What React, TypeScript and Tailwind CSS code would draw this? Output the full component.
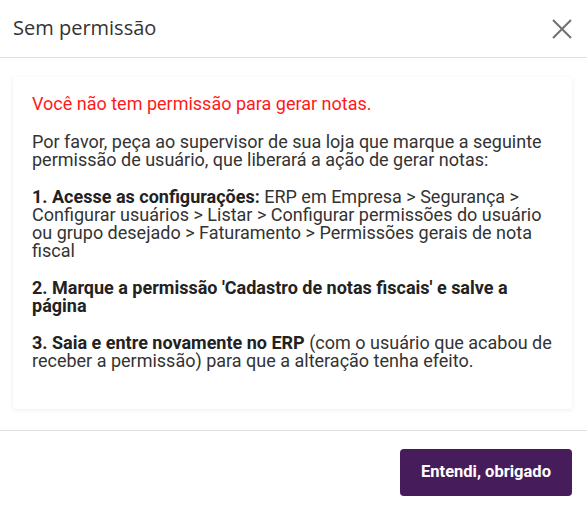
export default function App() {
  return (
    <div className="w-[587px] h-[512px] bg-white flex flex-col font-['Roboto',sans-serif] text-[#333]">
      {/* header */}
      <div className="h-[58px] flex items-center justify-between pl-[13px] pr-[14px] border-b border-[#e0e0e0] flex-shrink-0">
        <h1 className="font-['Open_Sans',sans-serif] text-[20px] text-[#333] mt-[-2px]">Sem permissão</h1>
        <button className="w-[22px] h-[22px] flex items-center justify-center text-[#707070]">
          <svg width="20" height="20" viewBox="0 0 20 20" fill="none" stroke="currentColor" strokeWidth="2">
            <path d="M1 1 L19 19 M19 1 L1 19" />
          </svg>
        </button>
      </div>

      {/* body */}
      <div className="flex-1 pt-[19px] pl-[13px] pr-[15px]">
        <div className="bg-white rounded-[2px] shadow-[0_1px_4px_rgba(0,0,0,0.08)] pt-[18px] pb-[20px] pl-[19px] pr-[18px] text-[18px] leading-[18px]">
          <p className="text-[#ff1a1a] mb-[20px]">Você não tem permissão para gerar notas.</p>
          <p className="mb-[19px]">
            Por favor, peça ao supervisor de sua loja que marque a seguinte permissão de usuário, que liberará a ação de gerar notas:
          </p>
          <p className="mb-[19px]">
            <b className="font-bold text-[#222]">1. Acesse as configurações:</b> ERP em Empresa &gt; Segurança &gt; Configurar usuários &gt; Listar &gt; Configurar permissões do usuário ou grupo desejado &gt; Faturamento &gt; Permissões gerais de nota fiscal
          </p>
          <p className="mb-[19px] font-bold text-[#222]">
            2. Marque a permissão 'Cadastro de notas fiscais' e salve a página
          </p>
          <p className="mb-[19px]">
            <b className="font-bold text-[#222]">3. Saia e entre novamente no ERP</b> (com o usuário que acabou de receber a permissão) para que a alteração tenha efeito.
          </p>
        </div>
      </div>

      {/* footer */}
      <div className="border-t border-[#e0e0e0] h-[82px] flex items-start justify-end pt-[18px] pr-[15px] flex-shrink-0">
        <button className="h-[47px] w-[172px] rounded-[4px] bg-[#461c5a] text-white font-bold text-[16.5px]">
          Entendi, obrigado
        </button>
      </div>
    </div>
  )
}
